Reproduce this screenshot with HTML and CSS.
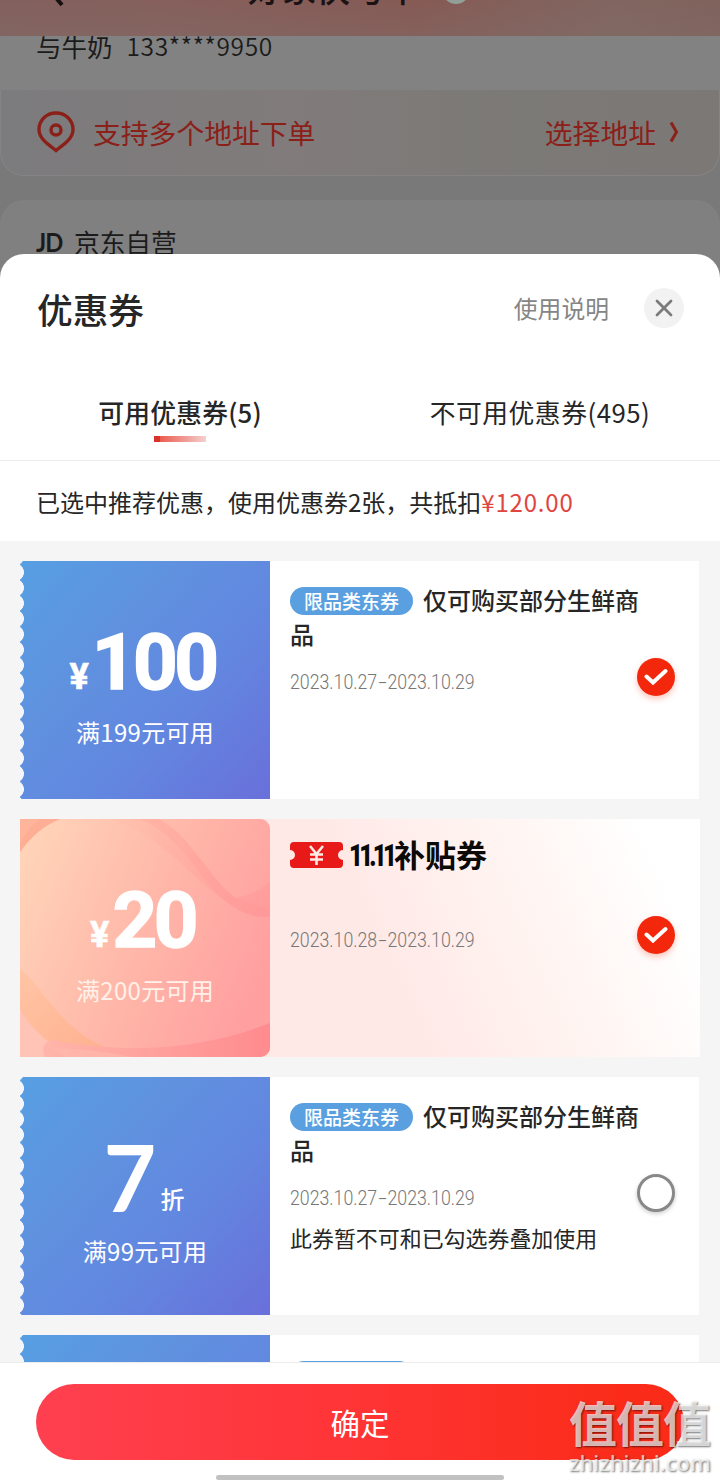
FILE: index.html
```html
<!DOCTYPE html>
<html lang="zh-CN">
<head>
<meta charset="utf-8">
<title>优惠券</title>
<link rel="stylesheet" href="styles.css">
</head>
<body>
<div class="screen">
  <div class="page">
    <header class="page-head">
      <svg class="back" width="24" height="36" viewBox="0 0 24 36"><path d="M19 0 5 15l15 18" fill="none" stroke="#171011" stroke-width="4"/></svg>
      <span class="page-title">好家快与车</span><i class="head-dot"></i>
    </header>
    <div class="user"><span>与牛奶</span><span class="phone">133****9950</span></div>
    <div class="address">
      <svg width="38" height="42" viewBox="0 0 38 42" fill="none" stroke="#8b2019" stroke-width="3.4"><path d="M19 39.500C14 35 2 29 2 18.500C2 9 9.500 2 19 2s17 7 17 16.500C36 29 24 35 19 39.500Z"/><circle cx="19" cy="19" r="5"/></svg>
      <span class="address-text">支持多个地址下单</span>
      <span class="choose">选择地址</span>
      <svg class="chev" width="10" height="22" viewBox="0 0 10 22"><path d="M2 1.500 7.500 11 2 20.500" fill="none" stroke="#8b2019" stroke-width="3"/></svg>
    </div>
    <div class="shop"><b class="jd">JD</b><span>京东自营</span></div>
  </div>

  <section class="sheet">
    <div class="sheet-head">
      <h1>优惠券</h1>
      <span class="help">使用说明</span>
      <span class="close"><svg width="18" height="18" viewBox="0 0 18 18"><path d="m2 2 14 14M16 2 2 16" stroke="#7b7b7b" stroke-width="2.800" stroke-linecap="round"/></svg></span>
    </div>
    <div class="tabs">
      <div class="tab active">可用优惠券(5)</div>
      <div class="tab">不可用优惠券(495)</div>
    </div>
    <div class="summary">已选中推荐优惠，使用优惠券2张，共抵扣<span class="amount">¥120.00</span></div>

    <div class="list">
      <article class="coupon">
        <div class="value blue">
          <div class="price"><span class="yen">¥</span><span class="num">100</span></div>
          <div class="cond">满199元可用</div>
        </div>
        <div class="info">
          <div class="name"><span class="tag">限品类东券</span>仅可购买部分生鲜商品</div>
          <div class="date">2023.10.27<i class="dash">-</i>2023.10.29</div>
        </div>
        <div class="check on"><svg width="24" height="18" viewBox="0 0 24 18"><path d="m2.500 8.500 6.500 6L21.500 3" fill="none" stroke="#fff" stroke-width="4" stroke-linecap="round"/></svg></div>
      </article>

      <article class="coupon festival">
        <div class="value pink">
          <svg class="art" width="250" height="238" viewBox="0 0 250 238">
            <defs>
              <linearGradient id="base" x1="0" y1=".2" x2="1" y2=".6"><stop offset="0" stop-color="#ffd3b8"/><stop offset=".5" stop-color="#ffb8a9"/><stop offset="1" stop-color="#ff9fa0"/></linearGradient>
              <linearGradient id="peach" x1="0" y1="0" x2="1" y2="1"><stop offset="0" stop-color="#ffc5a5"/><stop offset="1" stop-color="#ffb08f"/></linearGradient>
              <linearGradient id="rose" x1="0" y1="0" x2="1" y2="0"><stop offset="0" stop-color="#ffb5aa"/><stop offset="1" stop-color="#ff8b8e"/></linearGradient>
              <linearGradient id="veil" x1="0" y1="0" x2="1" y2="1"><stop offset="0" stop-color="#ff9b8e" stop-opacity=".05"/><stop offset="1" stop-color="#ff8b91" stop-opacity=".35"/></linearGradient>
            </defs>
            <path fill="url(#base)" d="M0 0h250v238H0z"/>
            <path fill="#ffb59b" d="M0 0h40Q17 9 0 33Z"/>
            <path fill="#ffa791" opacity=".5" d="M20 0h20Q17 9 0 33V25Q8 7 20 0Z"/>
            <path fill="url(#veil)" d="M88 0h50c32 14 52 62 78 79 12-3 23-7 34-16v35c-18 1-30-5-45-16C166 54 138 13 88 0Z"/>
            <path fill="#ff9290" opacity=".18" d="M120 0h18c32 14 52 62 78 79l34 12v7c-18 1-30-5-45-16C180 60 160 16 120 0Z"/>
            <path fill="url(#peach)" d="M0 150c24 18 35 55 84 78l-30 10C25 224 10 207 0 191Z"/>
            <path fill="#ffc4b5" d="M0 191c10 16 25 33 50 47H0Z"/>
            <path fill="url(#rose)" d="M25 238c-4-9-1-16 8-17 77 15 151 9 217-17v34Z"/>
            <path fill="#ffb9ad" opacity=".6" d="M32 229q35 0 80 9H45Z"/>
          </svg>
          <div class="price"><span class="yen">¥</span><span class="num">20</span></div>
          <div class="cond">满200元可用</div>
        </div>
        <div class="info">
          <div class="brand">
            <svg width="53" height="26" viewBox="0 0 53 26"><path fill="#e81919" d="M4 0h45q4 0 4 4v4a5 5 0 0 0 0 10v4q0 4-4 4H4q-4 0-4-4v-4A5 5 0 0 0 0 8V4q0-4 4-4Z"/><path d="m20 4 6.500 8L33 4M26.500 11v12M20 12.500h13M20 17.500h13" fill="none" stroke="#ffeae4" stroke-width="2.600"/></svg>
            <span class="eleven">11.11</span><span class="brand-name">补贴券</span>
          </div>
          <div class="date">2023.10.28<i class="dash">-</i>2023.10.29</div>
        </div>
        <div class="check on"><svg width="24" height="18" viewBox="0 0 24 18"><path d="m2.500 8.500 6.500 6L21.500 3" fill="none" stroke="#fff" stroke-width="4" stroke-linecap="round"/></svg></div>
      </article>

      <article class="coupon">
        <div class="value blue">
          <div class="discount"><span class="seven">7</span><span class="fold">折</span></div>
          <div class="cond">满99元可用</div>
        </div>
        <div class="info">
          <div class="name"><span class="tag">限品类东券</span>仅可购买部分生鲜商品</div>
          <div class="date">2023.10.27<i class="dash">-</i>2023.10.29</div>
          <div class="note">此券暂不可和已勾选券叠加使用</div>
        </div>
        <div class="check off"></div>
      </article>

      <article class="coupon">
        <div class="value blue"></div>
        <div class="info"><div class="name"><span class="tag"></span></div></div>
      </article>
    </div>

    <footer class="footer">
      <div class="confirm">确定</div>
      <i class="home-bar"></i>
    </footer>
  </section>

  <div class="watermark"><span class="wm-name">值值值</span><span class="wm-url">zhizhizhi.com</span></div>
</div>
</body>
</html>
```
FILE: styles.css
```css
* { box-sizing: border-box; }
body { margin: 0; font-family: "Noto Sans CJK SC", sans-serif; color: #262626; }
svg { display: block; flex: none; }
.screen { position: relative; width: 720px; height: 1480px; overflow: hidden; background: #797979; }

/* dimmed page behind the sheet */
.page-head { position: relative; height: 36px; overflow: hidden; background: linear-gradient(#80808000, #80706c50), linear-gradient(90deg, #83605d 0%, #85605c 20%, #865a55 58%, #816660 85%, #80625c 100%); }
.back { position: absolute; left: 42px; top: -28px; }
.page-title { position: absolute; left: 248px; top: -30px; font-size: 34px; line-height: 36px; font-weight: 500; color: #1b1213; }
.head-dot { position: absolute; left: 442px; top: -24px; width: 28px; height: 28px; border-radius: 50%; background: #939e99; }
.user { display: flex; gap: 14px; height: 54px; padding-left: 36px; background: #828282; font-size: 25.500px; line-height: 20px; color: #1b1b1b; }
.phone { font-size: 24.500px; font-weight: 350; letter-spacing: .65px; }
.address { display: flex; align-items: center; height: 86px; padding: 0 40px 2px 36px; border-radius: 0 0 24px 24px; border: solid #858383; border-width: 0 1px 1px; background: linear-gradient(90deg, #7c7b7d, #817b7b 40%, #7c7a77 65%, #7b7875); color: #8b2019; font-size: 27.800px; }
.address-text { margin-left: 18px; flex: 1; }
.chev { margin-left: 13px; }
.shop { display: flex; align-items: center; height: 100px; margin-top: 24px; padding: 0 36px 18px; border-radius: 24px 24px 0 0; background: #808080; font-size: 25.700px; color: #1b1b1b; }
.jd { width: 38px; font-family: Lato, sans-serif; font-size: 27px; letter-spacing: -1px; transform: scaleX(.88); transform-origin: 0 50%; }

/* bottom sheet */
.sheet { position: absolute; left: 0; top: 254px; width: 720px; height: 1226px; display: flex; flex-direction: column; border-radius: 24px 24px 0 0; background: #fff; overflow: hidden; }
.sheet-head { display: flex; align-items: center; height: 108px; padding: 0 36px 0 37px; }
h1 { flex: 1; margin: 0; font-size: 35.700px; font-weight: 500; line-height: 48px; padding-top: 1px; }
.help { font-size: 23.800px; line-height: 34px; color: #858585; }
.close { display: flex; align-items: center; justify-content: center; width: 40px; height: 40px; margin-left: 35px; border-radius: 50%; background: #f2f2f2; }
.tabs { display: grid; grid-template-columns: 1fr 1fr; height: 99px; border-bottom: 1px solid #ececec; }
.tab { padding-top: 32px; text-align: center; font-size: 25.800px; line-height: 36px; letter-spacing: .5px; }
.active { font-weight: 500; letter-spacing: .2px; }
.active::after { content: ""; display: block; width: 52px; height: 6px; margin: 6px auto 0; background: linear-gradient(90deg, #d93228 0 11%, #eb5d50 12%, #f5d0cf); }
.summary { height: 80px; padding-left: 36px; font-size: 24px; line-height: 81px; white-space: nowrap; }
.amount { color: #e0453f; letter-spacing: .8px; }
.list { flex: 1; min-height: 0; overflow: hidden; display: flex; flex-direction: column; gap: 20px; padding: 20px 20px 0; background: #f5f5f5; }

/* coupons */
.coupon { flex: none; display: flex; height: 238px; background: linear-gradient(#fff, #fff) 0 0 / 679px 100% no-repeat; }
.festival { background: linear-gradient(66deg, #ffe9e7 0 52%, #fff6f3 76%, #fff 92%); }
.value { position: relative; flex: none; width: 250px; height: 238px; padding-top: 63px; color: #fff; }
.blue { background: linear-gradient(132deg, #579fe2, #6090df 38%, #6287e0 62%, #6970da); }
.blue::before { content: ""; position: absolute; inset: 0 auto 0 0; width: 4px; background: radial-gradient(circle at -5px 50%, #f4f6fa 8.600px, transparent 9.200px) 0 3.500px / 4px 15.500px; }
.pink { border-radius: 0 10px 10px 0; overflow: hidden; background: #ffb5a8; }
.art { position: absolute; left: 0; top: 0; }
.price { position: relative; display: flex; justify-content: center; align-items: baseline; height: 88px; line-height: 78px; font-family: Roboto, sans-serif; font-weight: 700; padding-right: 5px; }
.num { font-size: 78px; letter-spacing: -3.500px; -webkit-text-stroke: 1.500px #fff; }
.yen { font-size: 36px; margin-right: 3px; -webkit-text-stroke: .6px #fff; }
.cond { position: relative; text-align: center; font-size: 24px; line-height: 40px; letter-spacing: .3px; }
.pink .cond { color: #fff1e9; }
.discount { display: flex; justify-content: center; align-items: baseline; height: 91px; line-height: 73px; padding-right: 2px; }
.seven { font-family: Lato, sans-serif; font-size: 91px; font-weight: 700; }
.fold { margin-left: 4px; font-size: 24px; font-weight: 500; position: relative; top: -3px; }
.info { flex: 1; min-width: 0; padding: 22px 0 0 20px; }
.name { width: 360px; font-size: 24px; line-height: 34px; font-weight: 500; }
.tag { display: inline-block; width: 123px; height: 28px; margin-right: 10px; border-radius: 14px; background: #5a9fe0; color: #fff; text-align: center; font-size: 19px; line-height: 27px; vertical-align: 1px; }
.tag:empty { vertical-align: -5px; }
.date { margin-top: 16px; font-family: Roboto, sans-serif; font-size: 20.500px; font-weight: 300; line-height: 30px; color: #777; transform: scaleX(.865); transform-origin: 0 0; white-space: nowrap; }
.dash { display: inline-block; font-style: normal; transform: scaleX(1.7); margin: 0 3px; }
.note { margin-top: 10px; font-size: 21.950px; line-height: 30px; }
.brand { display: flex; align-items: center; height: 26px; margin-top: 1px; color: #0c0909; }
.eleven { margin-left: 6px; width: 45px; font-family: Roboto, sans-serif; font-weight: 900; font-size: 32px; letter-spacing: -5px; white-space: nowrap; transform: scaleX(.75); transform-origin: 0 50%; }
.brand-name { font-size: 31px; font-weight: 700; line-height: 26px; padding-bottom: 3px; }
.festival .date { margin-top: 57px; }
.check { flex: none; display: flex; align-items: center; justify-content: center; width: 38px; height: 38px; margin: 97px 25px 0 0; border-radius: 50%; }
.on { background: #f2270c; box-shadow: 0 3px 6px #f2270c45; }
.off { border: 3px solid #888; background: #fff; box-shadow: 0 2px 4px #0003; }

.footer { flex: none; display: flex; flex-direction: column; align-items: center; height: 118px; padding-top: 21px; border-top: 1px solid #ececec; background: #fff; }
.confirm { width: 648px; height: 76px; border-radius: 38px; background: linear-gradient(90deg, #ff4050, #ff3538 45%, #fa2c19 90%); color: #fff; text-align: center; font-size: 29.500px; line-height: 76px; }
.home-bar { width: 288px; height: 5px; margin-top: 15px; border-radius: 3px; background: #c1c1c1; }

.watermark { position: absolute; left: 569px; top: 1396px; width: 150px; display: flex; flex-direction: column; color: #ffffffb0; text-shadow: 1px 1px 2px #0008; white-space: nowrap; }
.wm-name { font-size: 48px; line-height: 50px; letter-spacing: -1px; font-weight: 700; }
.wm-url { font-family: "Noto Sans", sans-serif; font-size: 22px; font-weight: 500; line-height: 32px; }
```
